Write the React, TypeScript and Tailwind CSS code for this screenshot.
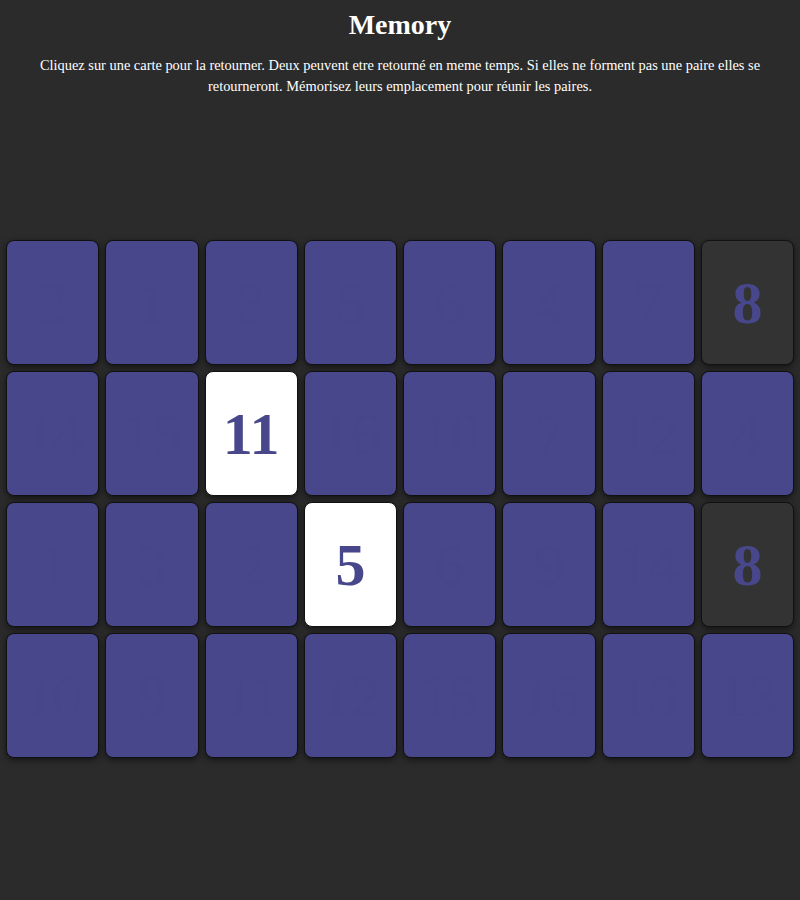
import React from 'react'

type Card = {
  value: number
  state: 'hidden' | 'flipped' | 'matched'
}

// board as captured: 8 columns x 4 rows
const board: Card[] = [
  2, 1, 3, 5, 6, 4, 7, 8,
  14, 15, 11, 16, 10, 7, 12, 4,
  1, 3, 2, 5, 6, 9, 14, 8,
  10, 9, 11, 12, 15, 16, 13, 13,
].map((value, i) => ({
  value,
  state: i === 7 || i === 23 ? 'matched' : i === 10 || i === 19 ? 'flipped' : 'hidden',
}))

function MemoryCard({ card }: { card: Card }) {
  const base =
    'h-[125px] rounded-[8px] border border-[#111111] shadow-[0_2px_6px_rgba(0,0,0,0.55)] flex items-center justify-center text-[60px] leading-none select-none'

  if (card.state === 'matched') {
    return <div className={`${base} bg-[#333333] text-[#48478c] font-bold`}>{card.value}</div>
  }
  if (card.state === 'flipped') {
    return <div className={`${base} bg-white text-[#48478c] font-bold`}>{card.value}</div>
  }
  return <div className={`${base} bg-[#48478c] text-[#47468a]`}>{card.value}</div>
}

export default function App() {
  return (
    <div
      className="min-h-screen bg-[#2b2b2b] text-white"
      style={{ fontFamily: '"Liberation Serif", "DejaVu Serif", serif' }}
    >
      <h1 className="pt-[7px] text-center text-[28px] font-bold leading-[36px]">Memory</h1>
      <p className="mx-auto mt-[12px] max-w-[780px] text-center text-[14.4px] leading-[21px]">
        Cliquez sur une carte pour la retourner. Deux peuvent etre retourné en meme temps. Si elles ne forment pas une paire elles se
        <br />
        retourneront. Mémorisez leurs emplacement pour réunir les paires.
      </p>

      <div className="mt-[143px] grid grid-cols-8 gap-[6px] px-[6px]">
        {board.map((card, i) => (
          <MemoryCard key={i} card={card} />
        ))}
      </div>
    </div>
  )
}
